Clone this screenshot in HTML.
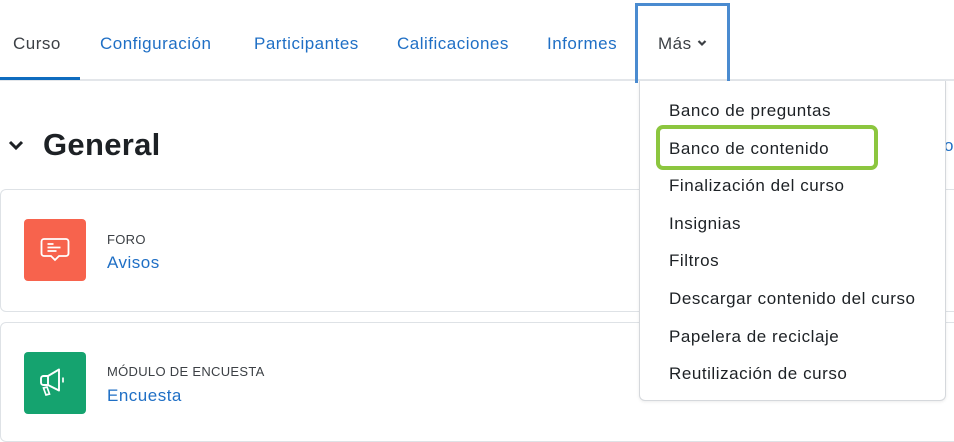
<!DOCTYPE html>
<html><head><meta charset="utf-8"><style>
*{margin:0;padding:0;box-sizing:border-box}
body{width:954px;height:430px;overflow:hidden;background:#fff;font-family:"Liberation Sans",sans-serif;position:relative;color:#1d2125}
.a{position:absolute;white-space:nowrap}
.tab{top:34px;font-size:17px;letter-spacing:0.5px;color:#1f6fc5}
.item{left:669px;font-size:17px;letter-spacing:0.55px;color:#1d2125}
</style></head><body>
<div class="a" style="left:0;top:79px;width:954px;height:2px;background:#e3e6ea"></div>
<div class="a" style="left:0;top:77px;width:80px;height:3px;background:#0f6cbf"></div>
<div class="a tab" style="left:13px;color:#3c4045">Curso</div>
<div class="a tab" style="left:100px">Configuración</div>
<div class="a tab" style="left:254px">Participantes</div>
<div class="a tab" style="left:397px">Calificaciones</div>
<div class="a tab" style="left:547px">Informes</div>
<div class="a" style="left:635px;top:3px;width:95px;height:80px;border:3px solid #4a8bd0;border-bottom:none"></div>
<div class="a tab" style="left:658px;color:#3c4045">Más <svg width="10" height="8" viewBox="0 0 10 8" style="vertical-align:2px"><path d="M1.5 2 L5 5.5 L8.5 2" stroke="#3c4045" stroke-width="2.2" fill="none"/></svg></div>

<svg class="a" style="left:8px;top:139px" width="16" height="12" viewBox="0 0 16 12"><path d="M2 3 L8 9 L14 3" stroke="#1d2125" stroke-width="3" fill="none"/></svg>
<div class="a" style="left:43px;top:127px;font-size:31px;font-weight:bold;letter-spacing:0.3px">General</div>
<div class="a" style="left:944px;top:136px;font-size:17px;color:#1f6fc5">o</div>

<div class="a" style="left:0;top:189px;width:960px;height:123px;border:1px solid #dee2e6;border-radius:6px"></div>
<div class="a" style="left:0;top:322px;width:960px;height:120px;border:1px solid #dee2e6;border-radius:6px"></div>

<div class="a" style="left:24px;top:219px;width:62px;height:62px;background:#f7634d;border-radius:4px">
<svg width="62" height="62" viewBox="0 0 62 62"><path d="M20 20 h22 a2.5 2.5 0 0 1 2.5 2.5 v12 a2.5 2.5 0 0 1 -2.5 2.5 h-7 l-4 4 l-4 -4 h-7 a2.5 2.5 0 0 1 -2.5 -2.5 v-12 a2.5 2.5 0 0 1 2.5 -2.5z" stroke="#fff" stroke-width="1.8" fill="none"/><path d="M23.5 25h6M23.5 28.5h13M23.5 32h9" stroke="#fff" stroke-width="1.7"/></svg></div>
<div class="a" style="left:107px;top:232px;font-size:13px;letter-spacing:0.3px;color:#3c4045">FORO</div>
<div class="a" style="left:107px;top:253px;font-size:17px;letter-spacing:0.5px;color:#1f6fc5">Avisos</div>

<div class="a" style="left:24px;top:352px;width:62px;height:62px;background:#15a36f;border-radius:4px">
<svg width="62" height="62" viewBox="0 0 62 62"><path d="M24 24 h-4.5 a2.5 2.5 0 0 0 -2.5 2.5 v4 a2.5 2.5 0 0 0 2.5 2.5 h4.5z M24 24 l11 -6.5 v21 l-11 -5.5" stroke="#fff" stroke-width="1.9" fill="none" stroke-linejoin="round"/><path d="M39 25.5v5" stroke="#fff" stroke-width="1.7"/><path d="M19.5 36 l3.5 -1 l2.5 7 l-3.5 1z" stroke="#fff" stroke-width="1.7" fill="none"/></svg></div>
<div class="a" style="left:107px;top:364px;font-size:13px;letter-spacing:0.3px;color:#3c4045">MÓDULO DE ENCUESTA</div>
<div class="a" style="left:107px;top:386px;font-size:17px;letter-spacing:0.5px;color:#1f6fc5">Encuesta</div>

<div class="a" style="left:639px;top:81px;width:307px;height:320px;background:#fff;border:1px solid #d5d8dc;border-top:none;border-radius:0 0 6px 6px;box-shadow:0 1px 3px rgba(0,0,0,.08)"></div>
<div class="a item" style="top:101px">Banco de preguntas</div>
<div class="a item" style="top:139px">Banco de contenido</div>
<div class="a item" style="top:176px">Finalización del curso</div>
<div class="a item" style="top:214px">Insignias</div>
<div class="a item" style="top:251px">Filtros</div>
<div class="a item" style="top:289px">Descargar contenido del curso</div>
<div class="a item" style="top:327px">Papelera de reciclaje</div>
<div class="a item" style="top:364px">Reutilización de curso</div>
<div class="a" style="left:656px;top:125px;width:222px;height:45px;border:4px solid #8cc63f;border-radius:7px"></div>
</body></html>
